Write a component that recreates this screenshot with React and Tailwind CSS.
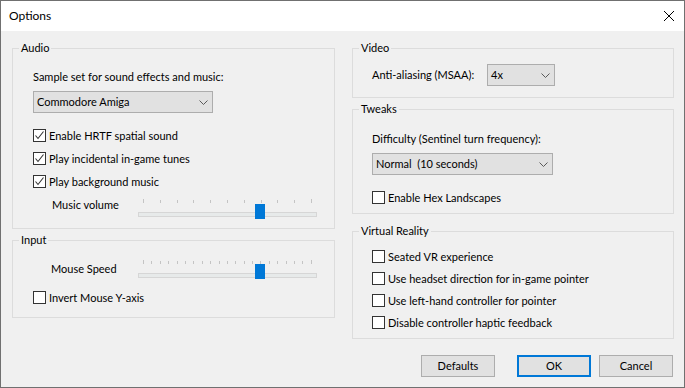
import React from 'react';

const Check = ({ checked, label }) => (
  <div className="flex items-center h-[13px]">
    <div className="w-[13px] h-[13px] border border-[#333333] bg-white flex items-center justify-center shrink-0">
      {checked && (
        <svg width="11" height="11" viewBox="0 0 11 11">
          <polyline points="1.5,5.5 4,8.5 9.5,1.5" fill="none" stroke="#333333" strokeWidth="1.1" />
        </svg>
      )}
    </div>
    <span className="ml-[3px] leading-[16px] whitespace-nowrap">{label}</span>
  </div>
);

const Select = ({ value, className }) => (
  <div className={`h-[22px] border border-[#adadad] bg-[#e1e1e1] flex items-center justify-between pl-[3px] pr-[4px] ${className}`}>
    <span className="whitespace-pre">{value}</span>
    <svg width="9" height="5" viewBox="0 0 9 5">
      <polyline points="0.5,0.5 4.5,4.5 8.5,0.5" fill="none" stroke="#5a5a5a" strokeWidth="1" />
    </svg>
  </div>
);

const Slider = ({ ticks }) => (
  <div className="relative w-[179px] h-[22px]">
    <div className="mx-[5px] h-[4px] mt-px flex justify-between items-end">
      {Array.from({ length: ticks }).map((_, i) => (
        <div
          key={i}
          className={`w-px bg-[#c4c4c4] ${i === 0 || i === ticks - 1 ? 'h-[4px]' : 'h-[3px]'}`}
        />
      ))}
    </div>
    <div className="mt-[9px] h-[5px] border border-[#d6d6d6] bg-[#e7eaea]" />
    {/* thumb sits over the track */}
    <div className="absolute left-[117px] top-[5px] w-[10px] h-[15px] bg-[#0078d7]" />
  </div>
);

const Group = ({ title, className, children }) => (
  <fieldset className={`border border-[#dcdcdc] ${className}`}>
    <legend className="ml-[6px] px-[2px] leading-[16px]">{title}</legend>
    {children}
  </fieldset>
);

const Button = ({ children, primary }) => (
  <div
    className={`w-[74px] h-[22px] bg-[#e1e1e1] flex items-center justify-center ${
      primary ? 'border-2 border-[#0078d7]' : 'border border-[#adadad]'
    }`}
  >
    {children}
  </div>
);

export default function App() {
  return (
    <div className="w-[685px] h-[388px] border border-[#707070] bg-[#f0f0f0] flex flex-col text-[11px] text-black font-['Lato','Liberation_Sans',sans-serif]">
      <div className="h-[30px] bg-white flex items-center justify-between pl-[8px] pr-[10px] shrink-0">
        <span className="text-[12px]">Options</span>
        <svg width="10" height="10" viewBox="0 0 10 10">
          <line x1="0" y1="0" x2="10" y2="10" stroke="#000" strokeWidth="1" />
          <line x1="10" y1="0" x2="0" y2="10" stroke="#000" strokeWidth="1" />
        </svg>
      </div>

      <div className="flex-1 flex flex-col pl-[11px] pr-[10px]">
        <div className="flex gap-[17px] mt-[9px]">
          <div className="w-[323px] flex flex-col">
            <Group title="Audio" className="h-[189px]">
              <div className="pl-[20px] pt-[13px] flex flex-col">
                <span className="leading-[16px]">Sample set for sound effects and music:</span>
                <Select value="Commodore Amiga" className="w-[180px] mt-[6px]" />
                <div className="mt-[16px]">
                  <Check checked label="Enable HRTF spatial sound" />
                </div>
                <div className="mt-[10px]">
                  <Check checked label="Play incidental in-game tunes" />
                </div>
                <div className="mt-[10px]">
                  <Check checked label="Play background music" />
                </div>
                <div className="flex mt-[9px] pl-[19px]">
                  <span className="w-[86px] leading-[16px]">Music volume</span>
                  <div className="mt-px">
                    <Slider ticks={11} />
                  </div>
                </div>
              </div>
            </Group>

            <Group title="Input" className="h-[86px] mt-[3px]">
              <div className="pl-[20px] flex flex-col">
                <div className="flex mt-[11px] pl-[18px]">
                  <span className="w-[87px] leading-[16px] mt-[2px]">Mouse Speed</span>
                  <Slider ticks={21} />
                </div>
                <div className="mt-[10px]">
                  <Check label="Invert Mouse Y-axis" />
                </div>
              </div>
            </Group>
          </div>

          <div className="w-[322px] flex flex-col">
            <Group title="Video" className="h-[58px]">
              <div className="pl-[19px] mt-[8px] flex items-center">
                <span className="w-[115px] leading-[16px]">Anti-aliasing (MSAA):</span>
                <Select value="4x" className="w-[68px]" />
              </div>
            </Group>

            <Group title="Tweaks" className="h-[113px] mt-[3px]">
              <div className="pl-[19px] pt-[14px] flex flex-col">
                <span className="leading-[16px]">Difficulty (Sentinel turn frequency):</span>
                <Select value="Normal  (10 seconds)" className="w-[181px] mt-[6px]" />
                <div className="mt-[16px]">
                  <Check label="Enable Hex Landscapes" />
                </div>
              </div>
            </Group>

            <Group title="Virtual Reality" className="h-[116px] mt-[9px]">
              <div className="pl-[19px] flex flex-col">
                <div className="mt-[11px]">
                  <Check label="Seated VR experience" />
                </div>
                <div className="mt-[9px]">
                  <Check label="Use headset direction for in-game pointer" />
                </div>
                <div className="mt-[9px]">
                  <Check label="Use left-hand controller for pointer" />
                </div>
                <div className="mt-[9px]">
                  <Check label="Disable controller haptic feedback" />
                </div>
              </div>
            </Group>
          </div>
        </div>

        <div className="flex justify-end mt-auto mb-[10px] pr-px">
          <Button>Defaults</Button>
          <div className="ml-[22px]">
            <Button primary>OK</Button>
          </div>
          <div className="ml-[8px]">
            <Button>Cancel</Button>
          </div>
        </div>
      </div>
    </div>
  );
}
